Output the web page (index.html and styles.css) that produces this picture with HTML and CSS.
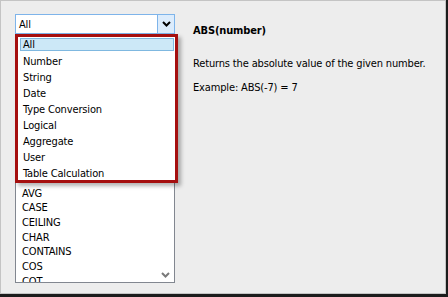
FILE: index.html
```html
<!DOCTYPE html>
<html lang="en">
<head>
    <meta charset="UTF-8">
    <title>Functions</title>
    <link rel="stylesheet" href="styles.css">
</head>
<body>
    <div class="frame">
        <div class="pane">
            <div class="left">
                <div class="combo">
                    <span class="combo-text">All</span>
                    <span class="combo-btn">
                        <svg width="9" height="6" viewBox="0 0 9 6"><path d="M1 1 L4.5 4.5 L8 1" fill="none" stroke="#000" stroke-width="2"/></svg>
                    </span>
                </div>
                <div class="listbox">
                    <ul class="funcs">
                        <li>ABS</li>
                        <li>ACOS</li>
                        <li>AND</li>
                        <li>ASCII</li>
                        <li>ASIN</li>
                        <li>ATAN</li>
                        <li>ATAN2</li>
                        <li>ATTR</li>
                        <li>AVG</li>
                        <li>CASE</li>
                        <li>CEILING</li>
                        <li>CHAR</li>
                        <li>CONTAINS</li>
                        <li>COS</li>
                        <li>COT</li>
                    </ul>
                    <div class="scroll">
                        <svg width="9" height="6" viewBox="0 0 9 6"><path d="M1 1 L4.5 4.5 L8 1" fill="none" stroke="#7a7a7a" stroke-width="2"/></svg>
                    </div>
                </div>
                <ul class="dropdown">
                    <li class="sel">All</li>
                    <li>Number</li>
                    <li>String</li>
                    <li>Date</li>
                    <li>Type Conversion</li>
                    <li>Logical</li>
                    <li>Aggregate</li>
                    <li>User</li>
                    <li>Table Calculation</li>
                </ul>
            </div>
            <div class="info">
                <h1>ABS(number)</h1>
                <p>Returns the absolute value of the given number.</p>
                <p>Example: ABS(-7) = 7</p>
            </div>
        </div>
    </div>
</body>
</html>
```

FILE: styles.css
```css
*{
    padding: 0;
    margin: 0;
    box-sizing: border-box;
}
ul li{
    list-style: none;
}
body{
    font-family: "DejaVu Sans Condensed", "Liberation Sans", sans-serif;
    font-size: 11px;
    letter-spacing: -0.15px;
    color: #000;
    background: #fff;
}
.frame{
    width: 448px;
    height: 297px;
    border-right: 2px solid #1c1c1c;
    border-bottom: 3px solid #1c1c1c;
}
.pane{
    height: 100%;
    background: #ededed;
    border: 1px solid #c4c4c4;
    display: flex;
    padding: 13px 0 0 14px;
    gap: 18px;
}
.left{
    position: relative;
    width: 160px;
}
.combo{
    height: 20px;
    width: 160px;
    background: #fff;
    border: 1px solid #7eb4ea;
    display: flex;
    align-items: center;
}
.combo-text{
    flex: 1;
    padding-left: 3px;
}
.combo-btn{
    width: 17px;
    height: 100%;
    background: #dcecfc;
    border-left: 1px solid #7eb4ea;
    display: flex;
    align-items: center;
    justify-content: center;
}
.listbox{
    margin-top: 2px;
    height: 247px;
    width: 160px;
    background: #fff;
    border: 1px solid #828790;
    display: flex;
    overflow: hidden;
}
.funcs{
    flex: 1;
    padding: 31px 0 0 6px;
}
.funcs li{
    height: 14.7px;
    line-height: 15px;
}
.scroll{
    width: 17px;
    display: flex;
    align-items: flex-end;
    justify-content: center;
    padding-bottom: 4px;
}
.dropdown{
    position: absolute;
    left: 0;
    top: 20px;
    width: 163px;
    height: 149px;
    background: #fff;
    border: 3px solid #a50f0f;
    padding: 1px 0 0 2px;
    box-shadow: 3px 3px 4px rgba(0, 0, 0, 0.3);
}
.dropdown li{
    height: 16px;
    line-height: 16px;
    padding-left: 3px;
}
.dropdown li.sel{
    height: 13px;
    line-height: 12px;
    margin: 0 1px 3px 0;
    background: #cce8f7;
    border: 1px solid #7fb8e0;
    padding-left: 2px;
}
.info{
    padding-top: 10px;
}
.info h1{
    font-size: 11px;
    font-weight: bold;
    margin-bottom: 20px;
}
.info p{
    margin-bottom: 11px;
}
```
